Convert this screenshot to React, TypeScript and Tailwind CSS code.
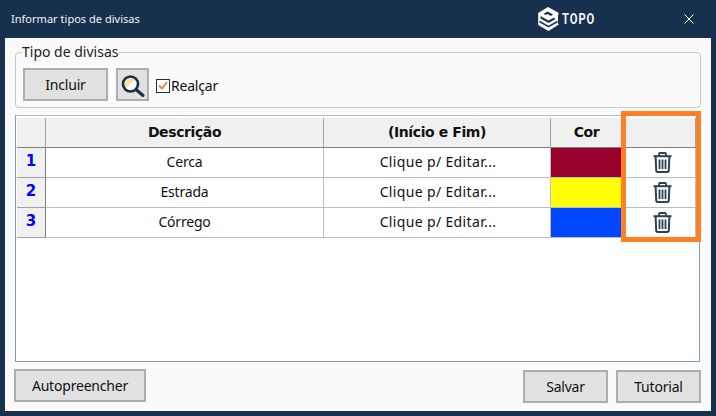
import React from "react";

const ui = "font-['Noto_Sans','Open_Sans',sans-serif]";

function Btn({ children, className = "" }: { children: React.ReactNode; className?: string }) {
  return (
    <button className={`h-[33px] bg-[#e1e1e1] border-2 border-[#adadad] text-[14px] leading-none text-[#111] tracking-[-0.2px] ${ui} ${className}`}>
      {children}
    </button>
  );
}

function Trash() {
  return (
    <svg width="19" height="21" viewBox="0 0 19 21" fill="none" stroke="#2a4258" strokeWidth="1.8">
      <path d="M.5 4.2h18" strokeWidth="2" />
      <path d="M6 4V2c0-.6.4-1 1-1h5c.6 0 1 .4 1 1v2" />
      <path d="M2.6 4.5l.6 13.8c0 1 .7 1.7 1.7 1.7h9.2c1 0 1.7-.7 1.7-1.7l.6-13.8" strokeWidth="2" />
      <path d="M6.5 7.5v9.5M9.5 7.5v9.5M12.5 7.5v9.5" strokeWidth="1.8" />
    </svg>
  );
}

function Logo() {
  return (
    <svg width="21" height="24" viewBox="0 0 21 24" fill="none">
      <path d="M10 0l10.5 5.8v12L10.5 24 .2 18V6z" fill="#fff" />
      <path d="M9.5 4.5l5.5 3-2.2 1.4-3.3-1.8-1.7 1-2.2-1.3z" fill="#16304d" />
      <path d="M2.5 9l8 4.5 5-2.8 2.2 1.2-7.2 4.2-8-4.5z" fill="#16304d" />
      <path d="M1.5 14.5l9 5.2 9-5.2" stroke="#16304d" strokeWidth="1.6" />
      <path d="M20.5 8v9" stroke="#16304d" strokeWidth="1" />
    </svg>
  );
}

function Magnifier() {
  return (
    <svg width="24" height="22" viewBox="0 0 24 22" fill="none">
      <circle cx="9.5" cy="9" r="7.5" fill="#fff" />
      <path d="M4.2 14.3A7.5 7.5 0 0 1 14.8 3.7z" fill="#fbe3a6" />
      <circle cx="9.5" cy="9" r="7.5" stroke="#16304d" strokeWidth="2.6" />
      <path d="M15.5 15l6.5 5.5" stroke="#16304d" strokeWidth="3" strokeLinecap="round" />
    </svg>
  );
}

const rows = [
  { n: "1", d: "Cerca", c: "bg-[#99002b]" },
  { n: "2", d: "Estrada", c: "bg-[#ffff00]" },
  { n: "3", d: "Córrego", c: "bg-[#0045ff]" },
];

const head = "bg-[#f0f0f0] border-r border-b border-r-[#a0a0a0] border-b-[#808080] flex items-center justify-center pb-px font-['DejaVu_Sans',sans-serif] font-bold text-[14px] text-[#111] tracking-[-0.4px]";
const cell = `bg-white border-r border-b border-[#bdbdbd] flex items-center justify-center pb-[2px] text-[14px] text-[#111] tracking-[-0.2px] ${ui}`;

export default function App() {
  return (
    <div className="w-[716px] h-[416px] bg-[#16304d] flex flex-col overflow-hidden relative">
      <div className="h-[38px] shrink-0 flex items-center pl-[11px] pr-[22px] text-white">
        <span className={`text-[11px] tracking-[0.02px] text-[#f2f5f8] ${ui}`}>Informar tipos de divisas</span>
        <div className="ml-auto flex items-center">
          <Logo />
          <span className="ml-[3px] w-[32px] font-['Roboto',sans-serif] font-bold text-[14px] tracking-[1.2px] text-[#f4f6f8] scale-x-[0.8] origin-left">TOPO</span>
        </div>
        <svg className="ml-[90px]" width="10" height="10" viewBox="0 0 10 10" stroke="#fff" strokeWidth="1">
          <path d="M.5.5l9 9M9.5.5l-9 9" />
        </svg>
      </div>
      <div className="mx-[5px] h-[373px] bg-[#fafafa] pt-[6px] pl-[10px] pr-[10px] flex flex-col">
        <fieldset className="h-[64px] shrink-0 border border-[#c8c8c8] rounded-[4px] pl-[7px] flex">
          <legend className={`text-[14px] leading-[16px] text-[#222] pr-px -ml-px ${ui}`}>Tipo de divisas</legend>
          <div className="flex items-start gap-[8px] mt-[8px]">
            <Btn className="w-[85px]">Incluir</Btn>
            <button className="w-[33px] h-[33px] bg-[#e1e1e1] border-2 border-[#adadad] flex items-center justify-center pl-px pt-[3px]">
              <Magnifier />
            </button>
            <div className="flex items-center self-center mt-[2px] -ml-px">
              <span className="w-[14px] h-[14px] border border-[#16304d] bg-white flex items-center justify-center">
                <svg width="10" height="9" viewBox="0 0 10 9" fill="none" stroke="#f37f4b" strokeWidth="2"><path d="M1 4.5L4 7.5 9 1" /></svg>
              </span>
              <span className={`ml-[1px] text-[14px] text-[#111] tracking-[-0.2px] ${ui}`}>Realçar</span>
            </div>
          </div>
        </fieldset>
        <div className="mt-[7px] mr-px h-[247px] shrink-0 border border-[#7d9fbc] border-t-[#bcbcbc] bg-white pl-px pt-[2px] pr-[4px]">
          <div className="grid grid-cols-[29px_278px_227px_72px_73px] grid-rows-[30px_30px_30px_30px]">
            <div className={head} />
            <div className={head}>Descrição</div>
            <div className={head}>(Início e Fim)</div>
            <div className={head}>Cor</div>
            <div className={head} />
            {rows.map((r) => (
              <React.Fragment key={r.n}>
                <div className="bg-[#f0f0f0] border-r border-b border-r-[#808080] border-b-[#a0a0a0] flex items-center justify-center pb-[2px] font-['DejaVu_Sans',sans-serif] font-bold text-[15px] text-[#0000ff]">{r.n}</div>
                <div className={cell}>{r.d}</div>
                <div className={`${cell} tracking-[0.35px] pl-[2px]`}>Clique p/ Editar...</div>
                <div className={`${r.c} border-r border-b border-[#bdbdbd]`} />
                <div className={`${cell} pl-[7px] pt-[2px] pb-0`}><Trash /></div>
              </React.Fragment>
            ))}
          </div>
        </div>
        <div className="mt-[7px] flex items-start">
          <Btn className="w-[132px] -ml-px">Autopreencher</Btn>
          <Btn className="w-[85px] ml-auto mt-px">Salvar</Btn>
          <Btn className="w-[85px] ml-[8px] mt-px">Tutorial</Btn>
        </div>
      </div>
      <div className="absolute left-[621px] top-[111px] w-[80px] h-[131px] border-[5px] border-[#ff7f27]" />
    </div>
  );
}
